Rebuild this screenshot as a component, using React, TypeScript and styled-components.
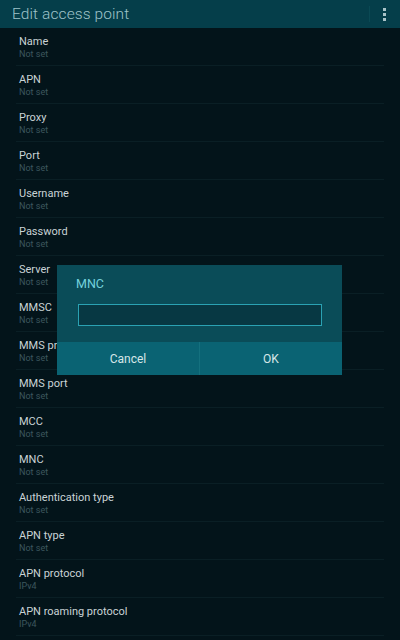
import React from "react";
import styled, { createGlobalStyle } from "styled-components";

const Global = createGlobalStyle`
  html, body { margin: 0; padding: 0; background: #03141a; }
  body { font-family: Roboto, "Noto Sans", sans-serif; }
  * { box-sizing: border-box; }
`;

const Screen = styled.div`
  position: relative;
  width: 400px;
  height: 640px;
  background: #03141a;
  overflow: hidden;
`;

const Header = styled.div`
  height: 28px;
  background: #053e4a;
  display: flex;
  align-items: center;
  justify-content: space-between;
  padding: 0 14px 0 12px;
`;

const Title = styled.div`
  color: #9fc3c9;
  font-size: 15.5px;
  font-weight: 300;
  letter-spacing: 0.1px;
`;

const MenuBtn = styled.div`
  display: flex;
  align-items: center;
  gap: 13px;
`;

const Sep = styled.div`
  width: 1px;
  height: 16px;
  background: #0a4954;
`;

const Dots = styled.div`
  display: flex;
  flex-direction: column;
  gap: 2px;
  span {
    width: 3px;
    height: 3px;
    background: #a9c3c8;
    display: block;
  }
`;

const List = styled.div`
  display: flex;
  flex-direction: column;
`;

const Row = styled.div`
  height: 38px;
  margin: 0 16px;
  padding: 6px 3px 0;
  border-bottom: 1px solid #0a1f25;
  display: flex;
  flex-direction: column;
`;

const Label = styled.div`
  color: #c9d3d6;
  font-size: 11px;
  line-height: 15px;
`;

const Value = styled.div`
  color: #3d575e;
  font-size: 9px;
  line-height: 11px;
`;

const Overlay = styled.div`
  position: absolute;
  left: 57px;
  top: 265px;
  width: 285px;
  height: 110px;
  background: #0a4c58;
  display: flex;
  flex-direction: column;
`;

const DialogTitle = styled.div`
  color: #74d2dd;
  font-size: 12.5px;
  padding: 11px 0 0 19px;
  height: 39px;
`;

const Input = styled.div`
  margin: 0 20px 0 21px;
  height: 22px;
  border: 1px solid #2aa2b3;
  background: #073843;
`;

const Buttons = styled.div`
  margin-top: auto;
  height: 33px;
  display: grid;
  grid-template-columns: 1fr 1px 1fr;
  background: #0a6373;
`;

const Btn = styled.div`
  display: flex;
  align-items: center;
  justify-content: center;
  color: #d6e6e8;
  font-size: 12px;
`;

const BtnSep = styled.div`
  background: #14707e;
`;

const rows: [string, string][] = [
  ["Name", "Not set"],
  ["APN", "Not set"],
  ["Proxy", "Not set"],
  ["Port", "Not set"],
  ["Username", "Not set"],
  ["Password", "Not set"],
  ["Server", "Not set"],
  ["MMSC", "Not set"],
  ["MMS proxy", "Not set"],
  ["MMS port", "Not set"],
  ["MCC", "Not set"],
  ["MNC", "Not set"],
  ["Authentication type", "Not set"],
  ["APN type", "Not set"],
  ["APN protocol", "IPv4"],
  ["APN roaming protocol", "IPv4"],
];

export default function App() {
  return (
    <Screen>
      <Global />
      <Header>
        <Title>Edit access point</Title>
        <MenuBtn>
          <Sep />
          <Dots>
            <span />
            <span />
            <span />
          </Dots>
        </MenuBtn>
      </Header>
      <List>
        {rows.map(([l, v]) => (
          <Row key={l}>
            <Label>{l}</Label>
            <Value>{v}</Value>
          </Row>
        ))}
      </List>
      <Overlay>
        <DialogTitle>MNC</DialogTitle>
        <Input />
        <Buttons>
          <Btn>Cancel</Btn>
          <BtnSep />
          <Btn>OK</Btn>
        </Buttons>
      </Overlay>
    </Screen>
  );
}
